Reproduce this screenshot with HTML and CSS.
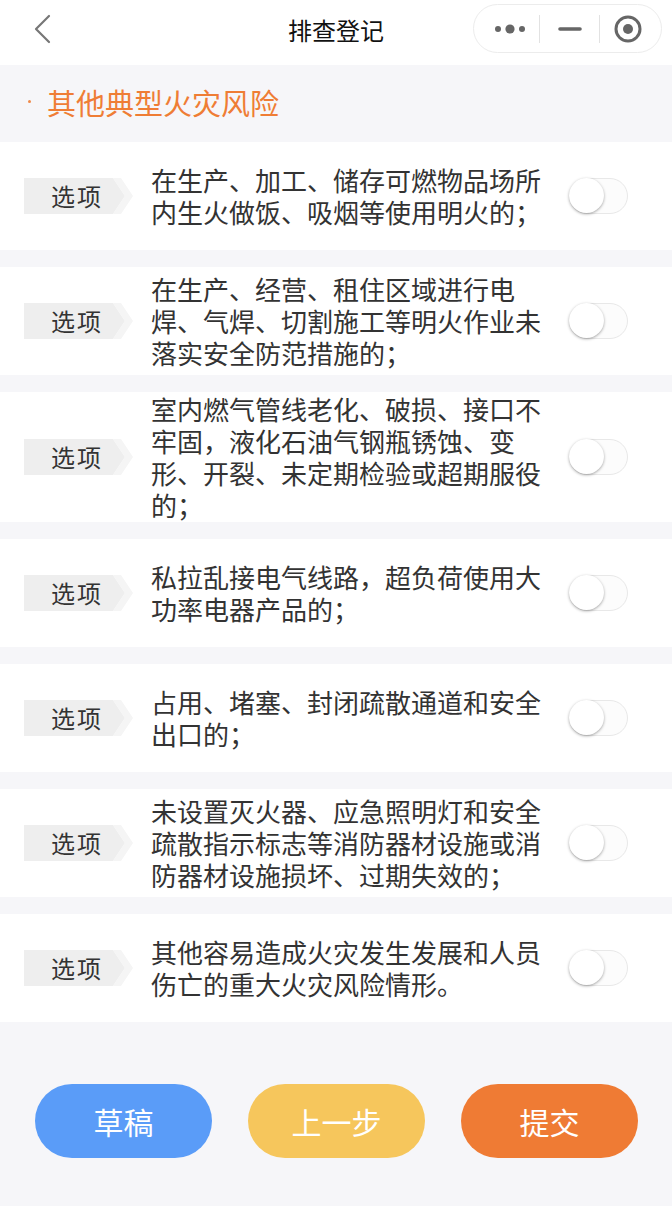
FILE: index.html
```html
<!DOCTYPE html>
<html lang="zh-CN">
<head>
<meta charset="utf-8">
<title>排查登记</title>
<link rel="stylesheet" href="styles.css">
</head>
<body>
<header class="nav">
  <div class="nav-left">
    <svg class="back" width="20" height="30" viewBox="0 0 20 30"><polyline points="16,2 3,15 16,28" fill="none" stroke="#777" stroke-width="2.2" stroke-linecap="round" stroke-linejoin="round"/></svg>
  </div>
  <div class="nav-title">排查登记</div>
  <div class="nav-right">
    <div class="capsule">
      <svg class="cap-icon" width="36" height="14" viewBox="0 0 36 14"><circle cx="6" cy="7" r="3" fill="#666"/><circle cx="18" cy="7" r="4.6" fill="#666"/><circle cx="30" cy="7" r="3" fill="#666"/></svg>
      <span class="cap-sep"></span>
      <svg class="cap-icon" width="24" height="14" viewBox="0 0 24 14"><line x1="2" y1="7" x2="22" y2="7" stroke="#666" stroke-width="3.6" stroke-linecap="round"/></svg>
      <span class="cap-sep"></span>
      <svg class="cap-icon" width="30" height="30" viewBox="0 0 30 30"><circle cx="15" cy="15" r="12" fill="none" stroke="#666" stroke-width="3"/><circle cx="15" cy="15" r="5" fill="#666"/></svg>
    </div>
  </div>
</header>

<section class="section-head"><span class="dot"></span><span class="section-title">其他典型火灾风险</span></section>

<main class="list">
  <div class="row">
    <div class="tag"><svg class="tag-bg" width="109" height="36" viewBox="0 0 109 36"><polygon points="0,0 89,0 101,18 89,36 0,36" fill="#eeeeee"/><polygon points="89,0 97,0 109,18 97,36 89,36 101,18" fill="#f5f5f5"/></svg><span class="tag-text">选项</span></div>
    <div class="text">在生产、加工、储存可燃物品场所内生火做饭、吸烟等使用明火的；</div>
    <div class="switch"><span class="knob"></span></div>
  </div>
  <div class="row">
    <div class="tag"><svg class="tag-bg" width="109" height="36" viewBox="0 0 109 36"><polygon points="0,0 89,0 101,18 89,36 0,36" fill="#eeeeee"/><polygon points="89,0 97,0 109,18 97,36 89,36 101,18" fill="#f5f5f5"/></svg><span class="tag-text">选项</span></div>
    <div class="text">在生产、经营、租住区域进行电焊、气焊、切割施工等明火作业未落实安全防范措施的；</div>
    <div class="switch"><span class="knob"></span></div>
  </div>
  <div class="row">
    <div class="tag"><svg class="tag-bg" width="109" height="36" viewBox="0 0 109 36"><polygon points="0,0 89,0 101,18 89,36 0,36" fill="#eeeeee"/><polygon points="89,0 97,0 109,18 97,36 89,36 101,18" fill="#f5f5f5"/></svg><span class="tag-text">选项</span></div>
    <div class="text">室内燃气管线老化、破损、接口不牢固，液化石油气钢瓶锈蚀、变形、开裂、未定期检验或超期服役的；</div>
    <div class="switch"><span class="knob"></span></div>
  </div>
  <div class="row">
    <div class="tag"><svg class="tag-bg" width="109" height="36" viewBox="0 0 109 36"><polygon points="0,0 89,0 101,18 89,36 0,36" fill="#eeeeee"/><polygon points="89,0 97,0 109,18 97,36 89,36 101,18" fill="#f5f5f5"/></svg><span class="tag-text">选项</span></div>
    <div class="text">私拉乱接电气线路，超负荷使用大功率电器产品的；</div>
    <div class="switch"><span class="knob"></span></div>
  </div>
  <div class="row">
    <div class="tag"><svg class="tag-bg" width="109" height="36" viewBox="0 0 109 36"><polygon points="0,0 89,0 101,18 89,36 0,36" fill="#eeeeee"/><polygon points="89,0 97,0 109,18 97,36 89,36 101,18" fill="#f5f5f5"/></svg><span class="tag-text">选项</span></div>
    <div class="text">占用、堵塞、封闭疏散通道和安全出口的；</div>
    <div class="switch"><span class="knob"></span></div>
  </div>
  <div class="row">
    <div class="tag"><svg class="tag-bg" width="109" height="36" viewBox="0 0 109 36"><polygon points="0,0 89,0 101,18 89,36 0,36" fill="#eeeeee"/><polygon points="89,0 97,0 109,18 97,36 89,36 101,18" fill="#f5f5f5"/></svg><span class="tag-text">选项</span></div>
    <div class="text">未设置灭火器、应急照明灯和安全疏散指示标志等消防器材设施或消防器材设施损坏、过期失效的；</div>
    <div class="switch"><span class="knob"></span></div>
  </div>
  <div class="row">
    <div class="tag"><svg class="tag-bg" width="109" height="36" viewBox="0 0 109 36"><polygon points="0,0 89,0 101,18 89,36 0,36" fill="#eeeeee"/><polygon points="89,0 97,0 109,18 97,36 89,36 101,18" fill="#f5f5f5"/></svg><span class="tag-text">选项</span></div>
    <div class="text">其他容易造成火灾发生发展和人员伤亡的重大火灾风险情形。</div>
    <div class="switch"><span class="knob"></span></div>
  </div>
</main>

<footer class="actions">
  <button class="btn btn-draft">草稿</button>
  <button class="btn btn-prev">上一步</button>
  <button class="btn btn-submit">提交</button>
</footer>
</body>
</html>
```

FILE: styles.css
```css
* { box-sizing: border-box; }
html, body {
  margin: 0;
  padding: 0;
  background: #f6f6f9;
  font-family: "Noto Sans CJK SC", "Noto Sans", sans-serif;
  color: #333;
}
.nav {
  height: 65px;
  background: #fff;
  display: grid;
  grid-template-columns: 1fr auto 1fr;
  align-items: start;
}
.nav-left {
  padding: 14px 0 0 33px;
}
.back { display: block; }
.nav-title {
  font-size: 24px;
  line-height: 30px;
  padding-top: 15px;
  color: #111;
}
.nav-right {
  display: flex;
  justify-content: flex-end;
  padding: 4px 10px 0 0;
}
.capsule {
  width: 189px;
  height: 49px;
  border: 1px solid #ececec;
  border-radius: 25px;
  background: #fff;
  display: flex;
  align-items: center;
  padding-left: 18px;
}
.cap-icon { display: block; }
.cap-sep {
  width: 1px;
  height: 28px;
  background: #e2e2e2;
}
.capsule .cap-sep:nth-of-type(1) { margin: 0 18px 0 11px; }
.capsule .cap-sep:nth-of-type(2) { margin: 0 13px 0 17px; }

.section-head {
  height: 77px;
  display: flex;
  align-items: center;
  padding: 0 0 4px 28px;
  color: #ef7d35;
}
.dot {
  width: 3px;
  height: 3px;
  border-radius: 50%;
  background: #ef8a4a;
  margin-right: 16px;
  flex: none;
}
.section-title {
  font-size: 29px;
  line-height: 36px;
}

.list {
  display: flex;
  flex-direction: column;
  gap: 17px;
}
.row {
  background: #fff;
  min-height: 108px;
  display: flex;
  align-items: center;
  padding: 1px 44px 1px 24px;
}
.tag {
  position: relative;
  width: 109px;
  height: 36px;
  flex: none;
  display: flex;
  align-items: center;
}
.tag-bg {
  position: absolute;
  left: 0;
  top: 0;
}
.tag-text {
  position: relative;
  font-size: 24px;
  line-height: 36px;
  letter-spacing: 2px;
  padding-left: 27px;
  color: #333;
}
.text {
  width: 394px;
  margin-left: 18px;
  font-size: 26px;
  line-height: 32px;
  color: #333;
}
.switch {
  margin-left: auto;
  width: 59px;
  height: 36px;
  flex: none;
  border: 1.5px solid #e8e8e8;
  border-radius: 18px;
  background: #fcfcfc;
  position: relative;
}
.knob {
  position: absolute;
  left: -1px;
  top: -1px;
  width: 35px;
  height: 35px;
  border-radius: 50%;
  background: #fff;
  box-shadow: 0 1px 3px rgba(0,0,0,0.35);
}

.actions {
  display: flex;
  justify-content: space-between;
  padding: 62px 34px 49px 35px;
}
.btn {
  width: 177px;
  height: 74px;
  border: none;
  border-radius: 37px;
  color: #fff;
  font-family: "Noto Sans CJK SC", "Noto Sans", sans-serif;
  font-size: 30px;
  padding: 0;
}
.btn-draft { background: #5a9cf8; }
.btn-prev { background: #f6c65c; }
.btn-submit { background: #ef7b34; }
```
